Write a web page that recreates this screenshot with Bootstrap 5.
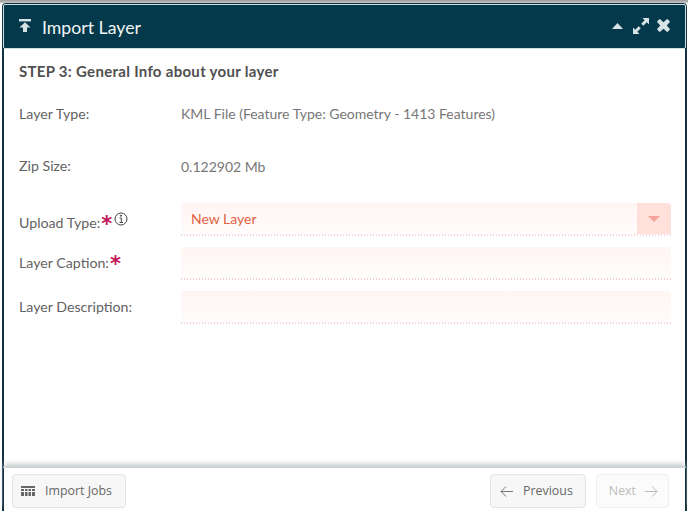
<!DOCTYPE html>
<html lang="en">
<head>
<meta charset="utf-8">
<title>Import Layer</title>
<link href="https://cdn.jsdelivr.net/npm/bootstrap@5.3.0/dist/css/bootstrap.min.css" rel="stylesheet">
<style>
html,body{height:100%;margin:0;overflow:hidden;background:#fff}
body{font-family:Lato,"Noto Sans",sans-serif;color:#555}
.shell{height:511px;padding-top:3px;background:linear-gradient(#9a9a9a,#c9c9c9 3px,#fff 3px);display:flex}
.win{flex:1;margin:0 1px 0 2px;border:solid #12303d;border-width:1px 2px 0 2px;border-radius:4px 4px 0 0;background:#fff;display:flex;flex-direction:column;min-width:0}
.head{height:45px;flex:none;background:#03394a;border:1px solid #cfe0e4;border-radius:2px;margin:0 -1px;color:#f1f5f6;padding:0 15px 0 15px}
.head-title{font-size:17.7px;margin-left:11px;line-height:1;position:relative;top:1px}
.head-btn{fill:#d8e3e6;display:block}
.head-tools{gap:8px;position:relative;top:-1px}
.head-caret{margin-right:2px}
.head-ico{position:relative;top:-1px}
.body-area{flex:1;padding:13px 14px 0 15px;min-height:0}
.step{font-size:15px;letter-spacing:.3px;font-weight:700;color:#505050;line-height:18px;margin:0 0 25px}
.frow{font-size:14.2px;line-height:18px}
.row-type{margin-bottom:34px}
.row-zip{margin-bottom:27px}
.row-input{margin-bottom:11px}
.lab{width:162px;flex:none;color:#626262;white-space:nowrap}
.val{color:#777;font-size:14px}
.val-zip{padding-top:1px}
.lab-upload{padding-top:11px}
.lab-caption{padding-top:7px}
.lab-desc{padding-top:7px}
.ast{color:#c2185b;font-size:21px;line-height:10px;font-weight:700;vertical-align:-3px;font-family:"DejaVu Sans",sans-serif;margin-left:1px}
.info-ico{margin-left:2px;vertical-align:top;position:relative;top:-2px}
.inp{flex:1;height:33px;background:linear-gradient(#fff5f3,#fffafa 70%,#fffdfd);border-radius:4px 4px 0 0;color:#e2613f;font-size:14px;padding:7px 10px 0;position:relative}
.inp::after{content:"";position:absolute;left:0;right:0;bottom:0;height:2px;background:linear-gradient(90deg,#f6d0d5 0 50%,transparent 50%) 0 0/3px 2px repeat-x}
.drop{position:absolute;right:0;top:0;width:34px;height:31px;background:#ffe0da;border-radius:0 4px 0 0;display:flex;align-items:center;justify-content:center}
.foot{height:44px;flex:none;box-shadow:0 -4px 5px -1px #c3cccd;border-top:1px solid #c9d1d3;padding:6px 17px 0 9px;margin:0 -1px}
.foot-right{gap:10px}
.fbtn{height:34px;background:#f7f7f7;border:1px solid #e3e3e3;border-radius:4px;font-family:"Open Sans",sans-serif;font-size:12.4px;color:#666;display:flex;align-items:center}
.fbtn-jobs{padding:0 13px 0 8px;gap:10px}
.fbtn-prev{padding:0 12px 0 9px;gap:10px}
.fbtn-next{padding:0 10px 0 12px;gap:9px;background:#fbfbfb;border-color:#efefef;color:#bbb}
</style>
</head>
<body>
<div class="shell">
<div class="win">
  <div class="head d-flex align-items-center">
    <svg width="12" height="13" viewBox="0 0 12 13" class="head-btn head-ico"><rect x="0" y="0" width="12" height="2.400"/><path d="M6 3.200 11.500 8.400H8V13H4V8.400H.5Z"/></svg>
    <span class="head-title">Import Layer</span>
    <div class="ms-auto d-flex align-items-center head-tools">
      <svg width="11" height="6" viewBox="0 0 11 6" class="head-btn head-caret"><path d="M5.500 0 11 6H0Z"/></svg>
      <svg width="16" height="16" viewBox="0 0 16 16" class="head-btn"><path d="M9.500 0H16V6.500L13.800 4.300 10.300 7.800 8.200 5.700 11.700 2.200ZM6.500 16H0V9.500L2.200 11.700 5.700 8.200 7.800 10.300 4.300 13.800Z"/></svg>
      <svg width="13" height="13" viewBox="0 0 13 13" class="head-btn"><path d="M3.200.3 6.500 3.300 9.800.3Q10.300 0 10.800.3L12.700 2.200Q13 2.700 12.700 3.200L9.700 6.500 12.700 9.800Q13 10.300 12.700 10.800L10.800 12.700Q10.300 13 9.800 12.700L6.500 9.700 3.200 12.700Q2.700 13 2.200 12.700L.3 10.800Q0 10.300.3 9.800L3.300 6.500.3 3.200Q0 2.700.3 2.200L2.200.3Q2.700 0 3.200.3Z"/></svg>
    </div>
  </div>
  <div class="body-area">
    <p class="step">STEP 3: General Info about your layer</p>
    <div class="frow row-type d-flex"><div class="lab">Layer Type:</div><div class="val">KML File (Feature Type: Geometry - 1413 Features)</div></div>
    <div class="frow row-zip d-flex"><div class="lab">Zip Size:</div><div class="val val-zip">0.122902 Mb</div></div>
    <div class="frow row-input d-flex">
      <div class="lab lab-upload">Upload Type:<span class="ast">*</span><svg width="14" height="14" viewBox="0 0 14 14" class="info-ico" fill="none" stroke="#444"><circle cx="7" cy="7" r="6"/><path d="M5.500 6H7.300V10.500M5.500 10.500H9"/><circle cx="7" cy="3.700" r=".6" fill="#444"/></svg></div>
      <div class="inp">New Layer<span class="drop"><svg width="12" height="6" viewBox="0 0 12 6"><path d="M0 0H12L6 6Z" fill="#f2a598"/></svg></span></div>
    </div>
    <div class="frow row-input d-flex"><div class="lab lab-caption">Layer Caption:<span class="ast">*</span></div><div class="inp"></div></div>
    <div class="frow d-flex"><div class="lab lab-desc">Layer Description:</div><div class="inp"></div></div>
  </div>
  <div class="foot d-flex">
    <div class="fbtn fbtn-jobs"><svg width="14" height="10" viewBox="0 0 14 10" fill="#666"><path d="M0 0H14V2H0ZM0 3H3V5H0ZM4 3H6.500V5H4ZM7.500 3H10V5H7.500ZM11 3H14V5H11ZM0 6H3V10H0ZM4 6H6.500V10H4ZM7.500 6H10V10H7.500ZM11 6H14V10H11Z"/></svg><span>Import Jobs</span></div>
    <div class="ms-auto d-flex foot-right">
      <div class="fbtn fbtn-prev"><svg width="13" height="11" viewBox="0 0 13 11" fill="none" stroke="#777"><path d="M13 5.500H1M6 .5 1 5.500 6 10.500"/></svg><span>Previous</span></div>
      <div class="fbtn fbtn-next"><span>Next</span><svg width="13" height="11" viewBox="0 0 13 11" fill="none" stroke="#bbb"><path d="M0 5.500H12M7 .5 12 5.500 7 10.500"/></svg></div>
    </div>
  </div>
</div>
</div>
</body>
</html>
